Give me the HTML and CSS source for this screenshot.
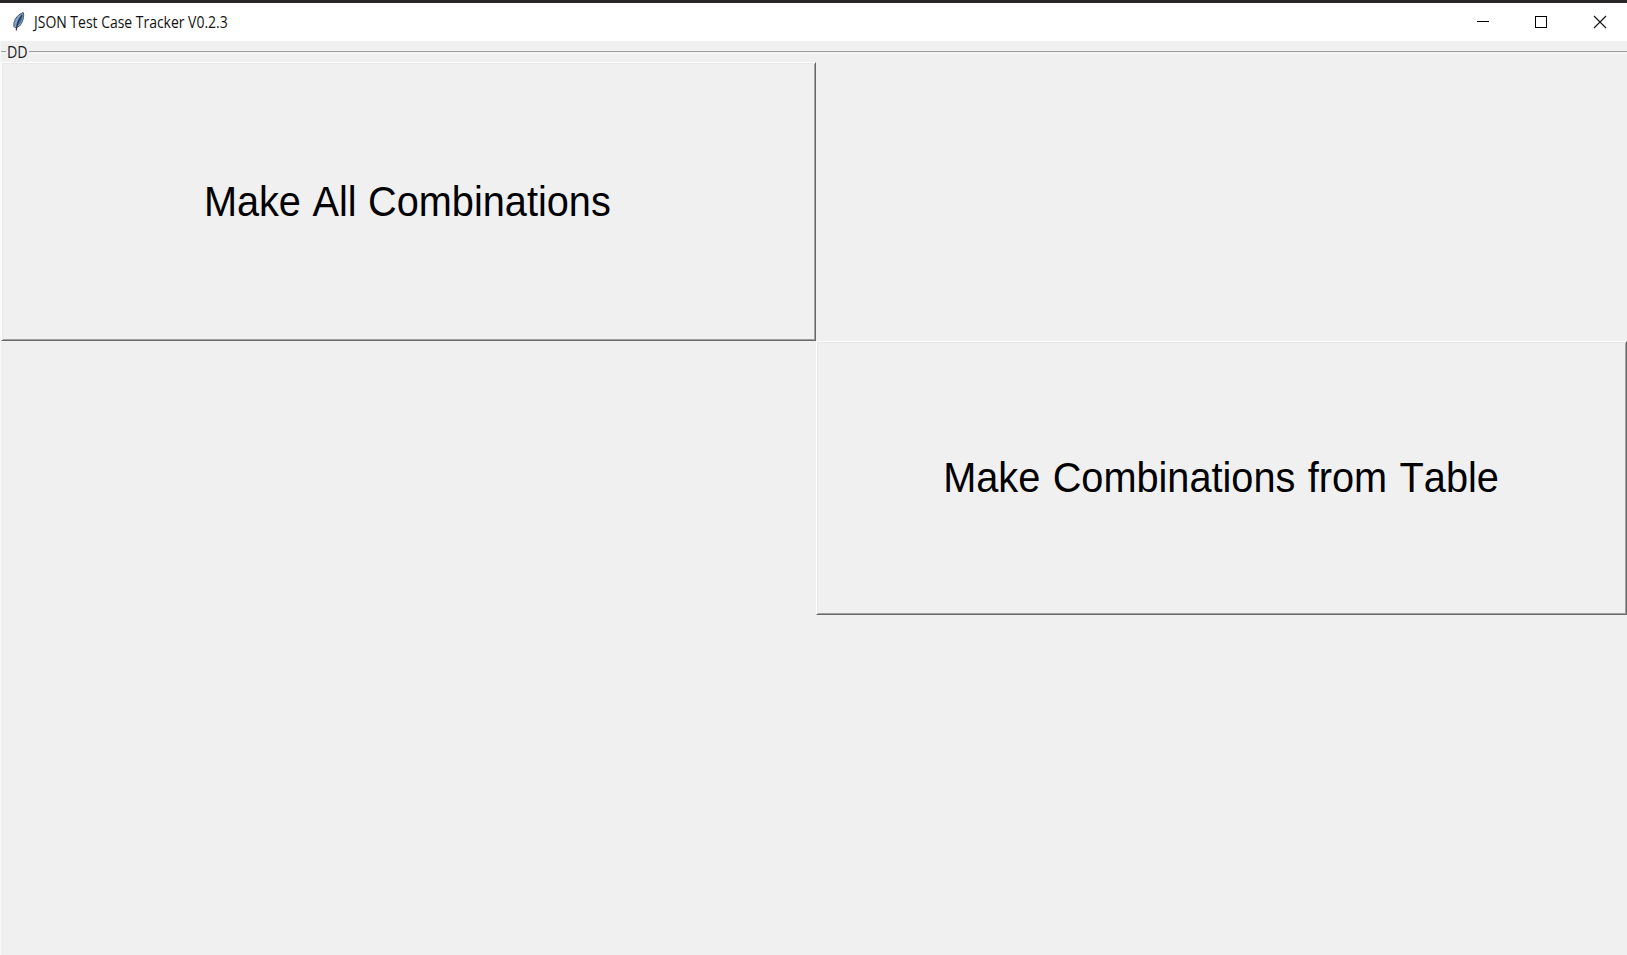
FILE: index.html
```
<!DOCTYPE html>
<html lang="en">
<head>
<meta charset="utf-8">
<title>JSON Test Case Tracker V0.2.3</title>
<link rel="stylesheet" href="styles.css">
</head>
<body>
<div class="window">
  <header class="titlebar">
    <svg class="feather" width="14" height="22" viewBox="0 0 14 22" aria-hidden="true">
      <path d="M11.300 1.500C7 3 3.200 6.500 2 11.500L1.800 15.500 4 17 7.500 15C10.500 12 12.500 5.500 11.300 1.500Z" fill="#86a3c8" stroke="#4b586c" stroke-width="1"/>
      <path d="M10.500 3.500C6.500 6 5 10 4 15.500L7 13.500C9.500 10.500 11 7 10.500 3.500Z" fill="#3f6ea9"/>
      <path d="M10 4C7 8.500 4.800 13 4.300 19.500" fill="none" stroke="#2b3442" stroke-width="1.200"/>
    </svg>
    <span class="title">JSON Test Case Tracker V0.2.3</span>
    <svg class="controls" width="174" height="38" viewBox="0 0 174 38" shape-rendering="crispEdges" aria-hidden="true">
      <path d="M24 18.500H36" stroke="#000" fill="none"/>
      <rect x="82.500" y="13.500" width="11" height="11" stroke="#000" fill="none"/>
      <path d="M141 13L153 25M153 13L141 25" stroke="#111" stroke-width="1.100" fill="none" shape-rendering="auto"/>
    </svg>
  </header>
  <main class="frame">
    <div class="legend"><span class="lead"></span><span class="name">DD</span><span class="rule"></span></div>
    <div class="grid">
      <button class="action first"><span class="label">Make All Combinations</span></button>
      <button class="action second"><span class="label">Make Combinations from Table</span></button>
    </div>
  </main>
</div>
</body>
</html>
```
FILE: styles.css
```
* { box-sizing: border-box; }
body { margin: 0; overflow: hidden; background: #f0f0f0; }
.window { height: 955px; display: flex; flex-direction: column; border-top: 3px solid #272526; }
.titlebar { height: 38px; flex: none; display: flex; align-items: center; background: #fff; }
.feather { margin: 0 0 0 12px; }
.title {
  margin: 0 0 1px 8px;
  font: 15.5px/20px "Open Sans", sans-serif;
  color: #111;
  white-space: nowrap;
  transform: scaleX(0.9);
  transform-origin: 0 50%;
}
.controls { margin-left: auto; }
.frame { flex: 1; display: flex; flex-direction: column; border-left: 1px solid #f8f8f8; }
.legend { height: 21px; display: flex; align-items: flex-start; }
.lead, .rule { height: 3px; margin-top: 10px; border-top: 1px solid #a0a0a0; border-bottom: 1px solid #fafafa; }
.lead { width: 5px; }
.rule { flex: 1; }
.name {
  width: 23px;
  padding-left: 1px;
  font: 15.5px/22px "Open Sans", sans-serif;
  color: #222;
  transform: scaleX(0.92);
  transform-origin: 0 50%;
}
.grid { flex: 1; display: grid; grid-template-columns: 815px 811px; grid-template-rows: 279px 274px; }
.action {
  display: flex;
  align-items: center;
  justify-content: center;
  padding: 0;
  background: #f0f0f0;
  border: 1px solid;
  border-color: #fff #696969 #696969 #fff;
  box-shadow: inset 1px 1px #e8e8e8, inset -1px -1px #a0a0a0;
  font: 42px/48px "Liberation Sans", Arial, sans-serif;
  color: #000;
}
.second { grid-area: 2 / 2; }
.first .label { padding-right: 2px; word-spacing: 0.5px; }
.label {
  white-space: nowrap;
  font-kerning: none;
  word-spacing: 1.5px;
  transform: scaleX(0.945);
}
```
